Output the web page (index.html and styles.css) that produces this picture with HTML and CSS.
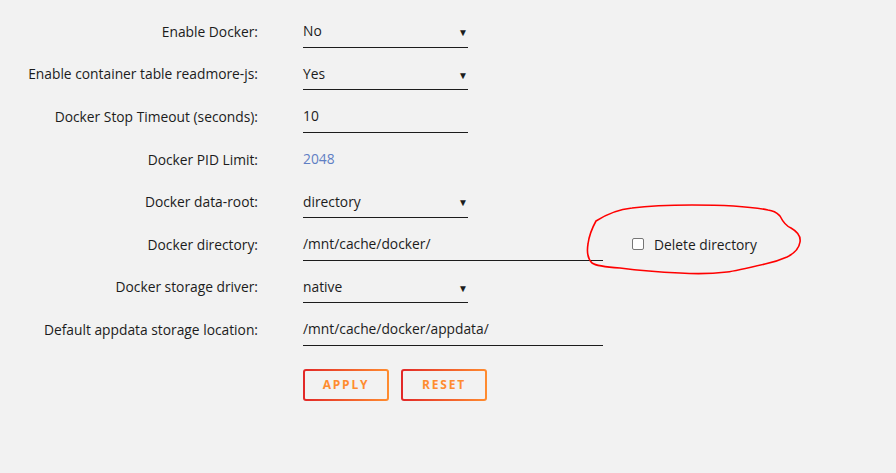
FILE: index.html
```
<!DOCTYPE html>
<html lang="en">
<head>
  <meta charset="UTF-8">
  <title>Docker Settings</title>
  <link rel="stylesheet" href="styles.css">
</head>
<body>

  <div class="form">
    <div class="row">
      <div class="label">Enable Docker:</div>
      <div class="field select">No<span class="arrow">&#9660;</span></div>
    </div>
    <div class="row">
      <div class="label">Enable container table readmore-js:</div>
      <div class="field select">Yes<span class="arrow">&#9660;</span></div>
    </div>
    <div class="row">
      <div class="label">Docker Stop Timeout (seconds):</div>
      <div class="field select">10</div>
    </div>
    <div class="row">
      <div class="label">Docker PID Limit:</div>
      <div class="field plain placeholder">2048</div>
    </div>
    <div class="row">
      <div class="label">Docker data-root:</div>
      <div class="field select">directory<span class="arrow">&#9660;</span></div>
    </div>
    <div class="row">
      <div class="label">Docker directory:</div>
      <div class="field wide">/mnt/cache/docker/</div>
      <label class="check"><span class="box"></span>Delete directory</label>
    </div>
    <div class="row">
      <div class="label">Docker storage driver:</div>
      <div class="field select">native<span class="arrow">&#9660;</span></div>
    </div>
    <div class="row">
      <div class="label">Default appdata storage location:</div>
      <div class="field wide">/mnt/cache/docker/appdata/</div>
    </div>
    <div class="buttons">
      <button>Apply</button>
      <button>Reset</button>
    </div>
  </div>

  <svg class="scribble" width="240" height="90" viewBox="580 195 240 90">
    <path d="M596 221 C610 212 622 209 632 208 C655 205 675 205 692 205 C720 205 748 206 768 210 C776 211 778 214 780 216 C783 222 786 226 791 228 C798 232 801 236 800 242 C799 249 795 253 787 257 C778 261 770 263 765 264 C748 268 735 271 727 272 C710 274 695 274 680 273 C655 272 635 270 620 268 C605 267 596 266 592 263 C587 258 587 250 588 244 C589 236 591 230 596 221 Z" fill="none" stroke="#f00" stroke-width="1.6"/>
  </svg>

</body>
</html>
```

FILE: styles.css
```
body {
  margin: 0;
  background: #f2f2f2;
  font-family: 'Open Sans', sans-serif;
  font-size: 13.8px;
  color: #1c1c1c;
}

.form {
  padding-top: 15px;
}

.row {
  display: flex;
  align-items: center;
  height: 32.6px;
  margin-bottom: 10px;
}

.label {
  width: 258px;
  text-align: right;
  margin-right: 45px;
}

.field {
  display: flex;
  align-items: center;
  border-bottom: 1px solid #1c1c1c;
  box-sizing: border-box;
  height: 32.6px;
  position: relative;
}

.select {
  width: 165px;
}

.wide {
  width: 300px;
}

.plain {
  border-bottom-color: transparent;
}

.placeholder {
  color: #5f7fc4;
}

.arrow {
  position: absolute;
  right: 0;
  top: 10px;
  font-size: 10px;
}

.check {
  display: flex;
  align-items: center;
  margin-left: 29px;
}

.box {
  width: 10px;
  height: 10px;
  border: 1px solid #767676;
  border-radius: 2px;
  background: #fff;
  margin-right: 10px;
}

.buttons {
  display: flex;
  gap: 12px;
  margin-left: 303px;
  margin-top: 23px;
}

button {
  width: 86px;
  height: 32px;
  border: 2px solid transparent;
  border-radius: 3px;
  background: linear-gradient(#f2f2f2, #f2f2f2) padding-box,
              linear-gradient(90deg, #e22828, #ff8c2f) border-box;
  color: #ff8c2f;
  font-family: 'Open Sans', sans-serif;
  font-weight: bold;
  font-size: 12px;
  letter-spacing: 1.8px;
  text-transform: uppercase;
  cursor: pointer;
}

.scribble {
  position: absolute;
  left: 580px;
  top: 195px;
}
```
